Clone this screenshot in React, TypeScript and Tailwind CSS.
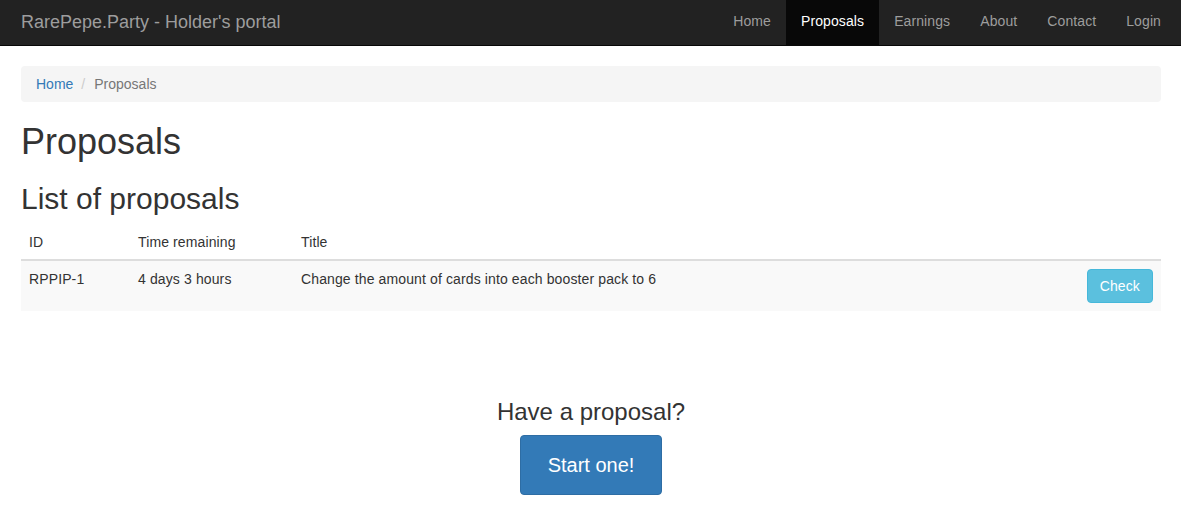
import React from "react";

const navLinks = ["Home", "Proposals", "Earnings", "About", "Contact", "Login"];

function Navbar() {
  return (
    <nav className="h-[46px] bg-[#222] border-b border-[#080808] flex items-stretch justify-between pl-[21px] pr-[5px]">
      <a className="flex items-center pb-[2px] text-[18px] text-[#9d9d9d]" href="#">
        RarePepe.Party - Holder's portal
      </a>
      <ul className="flex items-stretch">
        {navLinks.map((link) => (
          <li key={link} className="flex">
            <a
              href="#"
              className={
                link === "Proposals"
                  ? "flex items-center pb-[3px] px-[15px] text-[14px] tracking-[0.1px] text-white bg-[#080808]"
                  : "flex items-center pb-[3px] px-[15px] text-[14px] tracking-[0.1px] text-[#9d9d9d]"
              }
            >
              {link}
            </a>
          </li>
        ))}
      </ul>
    </nav>
  );
}

export default function App() {
  return (
    <div className="min-h-[532px] bg-white text-[#333] text-[14px] leading-[20px] font-['Liberation_Sans',Arial,sans-serif]">
      <Navbar />
      <div className="pl-[21px] pr-[20px] pt-[20px]">
        <ol className="flex items-center h-[36px] px-[15px] bg-[#f5f5f5] rounded-[4px]">
          <li>
            <a href="#" className="text-[#337ab7]">
              Home
            </a>
          </li>
          <li className="pl-[8px] pr-[9px] text-[#ccc]">/</li>
          <li className="text-[#777]">Proposals</li>
        </ol>

        <h1 className="mt-[20px] mb-[10px] text-[36px] leading-[1.1] font-normal">Proposals</h1>
        <h2 className="mt-[20px] mb-[9px] text-[30px] leading-[1.1] font-normal">List of proposals</h2>

        <table className="w-full border-collapse tracking-[0.12px]">
          <thead>
            <tr className="border-b-2 border-[#ddd] text-left">
              <th className="w-[109px] px-[8px] pt-[8px] pb-[7px] font-normal">ID</th>
              <th className="w-[163px] px-[8px] pt-[8px] pb-[7px] font-normal">Time remaining</th>
              <th className="px-[8px] pt-[8px] pb-[7px] font-normal">Title</th>
              <th className="px-[8px] pt-[8px] pb-[7px] font-normal"></th>
            </tr>
          </thead>
          <tbody>
            <tr className="bg-[#f9f9f9] align-top">
              <td className="p-[8px]">RPPIP-1</td>
              <td className="p-[8px]">4 days 3 hours</td>
              <td className="p-[8px]">Change the amount of cards into each booster pack to 6</td>
              <td className="p-[8px] text-right">
                <button className="h-[34px] px-[12px] rounded-[4px] bg-[#5bc0de] border border-[#46b8da] text-white">
                  Check
                </button>
              </td>
            </tr>
          </tbody>
        </table>

        <div className="flex flex-col items-center mt-[88px]">
          <h3 className="text-[24px] leading-[1.1] font-normal mb-[10px]">Have a proposal?</h3>
          <button className="w-[142px] h-[60px] rounded-[4px] bg-[#337ab7] border border-[#2e6da4] text-white text-[20px]">
            Start one!
          </button>
        </div>
      </div>
    </div>
  );
}
